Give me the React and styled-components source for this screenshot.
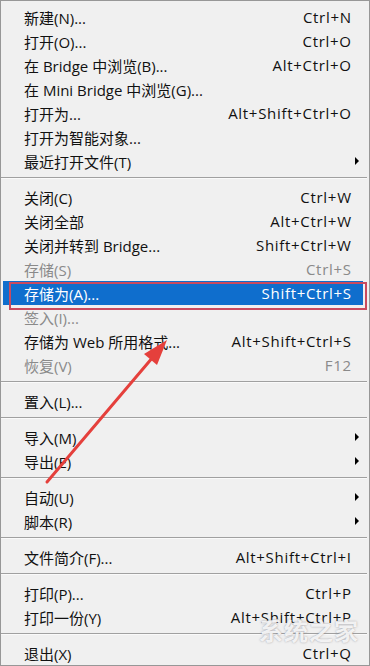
import React from "react";
import styled, { createGlobalStyle } from "styled-components";

const GlobalStyle = createGlobalStyle`
  html, body {
    margin: 0;
    padding: 0;
    background: #f0f0f0;
  }
`;

const Menu = styled.div`
  position: relative;
  box-sizing: border-box;
  width: 370px;
  height: 666px;
  padding-top: 4px;
  background: #f0f0f0;
  border: 1px solid #979797;
  font-family: "Open Sans", "Noto Sans CJK SC", sans-serif;
  font-size: 15px;
  color: #111;
  overflow: hidden;
`;

const Row = styled.div`
  display: flex;
  align-items: center;
  height: 24px;
  margin: 0 6px 0 2px;
  padding-left: 21px;
  background: ${(p) => (p.active ? "#0f6ecd" : "transparent")};
  color: ${(p) => (p.active ? "#fff" : p.disabled ? "#8a8a8a" : "#111")};
  white-space: nowrap;
`;

const Label = styled.span`
  flex: 1;
`;

const Shortcut = styled.span`
  text-align: right;
  letter-spacing: 0.7px;
  margin-right: -0.7px;
`;

const ArrowCell = styled.span`
  display: flex;
  align-items: center;
  width: 12px;
  padding-left: 4px;
  box-sizing: border-box;
`;

const Triangle = styled.span`
  width: 0;
  height: 0;
  border-top: 4px solid transparent;
  border-bottom: 4px solid transparent;
  border-left: 4px solid #000;
`;

const Separator = styled.div`
  box-sizing: border-box;
  height: 12px;
  padding-top: 4px;
  margin-right: 2px;
  &::after {
    content: "";
    display: block;
    height: 1px;
    background: #a0a0a0;
    border-bottom: 1px solid #fafafa;
  }
`;

const Highlight = styled.div`
  position: absolute;
  left: 8px;
  top: 281px;
  width: 354px;
  height: 24px;
  border: 2px solid #c94a5f;
  pointer-events: none;
`;

const Overlay = styled.svg`
  position: absolute;
  left: 0;
  top: 0;
  pointer-events: none;
`;

const Watermark = styled.div`
  position: absolute;
  right: 10px;
  bottom: 18px;
  font-family: "Noto Sans CJK SC", sans-serif;
  font-size: 24px;
  font-weight: 700;
  letter-spacing: 1px;
  color: rgba(255, 255, 255, 0.85);
  text-shadow: 0 0 2px rgba(120, 120, 130, 0.7);
  pointer-events: none;
`;

const groups = [
  [
    { label: "新建(N)...", key: "Ctrl+N" },
    { label: "打开(O)...", key: "Ctrl+O" },
    { label: "在 Bridge 中浏览(B)...", key: "Alt+Ctrl+O" },
    { label: "在 Mini Bridge 中浏览(G)..." },
    { label: "打开为...", key: "Alt+Shift+Ctrl+O" },
    { label: "打开为智能对象..." },
    { label: "最近打开文件(T)", sub: true },
  ],
  [
    { label: "关闭(C)", key: "Ctrl+W" },
    { label: "关闭全部", key: "Alt+Ctrl+W" },
    { label: "关闭并转到 Bridge...", key: "Shift+Ctrl+W" },
    { label: "存储(S)", key: "Ctrl+S", disabled: true },
    { label: "存储为(A)...", key: "Shift+Ctrl+S", active: true },
    { label: "签入(I)...", disabled: true },
    { label: "存储为 Web 所用格式...", key: "Alt+Shift+Ctrl+S" },
    { label: "恢复(V)", key: "F12", disabled: true },
  ],
  [{ label: "置入(L)..." }],
  [
    { label: "导入(M)", sub: true },
    { label: "导出(E)", sub: true },
  ],
  [
    { label: "自动(U)", sub: true },
    { label: "脚本(R)", sub: true },
  ],
  [{ label: "文件简介(F)...", key: "Alt+Shift+Ctrl+I" }],
  [
    { label: "打印(P)...", key: "Ctrl+P" },
    { label: "打印一份(Y)", key: "Alt+Shift+Ctrl+P" },
  ],
  [{ label: "退出(X)", key: "Ctrl+Q" }],
];

export default function App() {
  return (
    <>
      <GlobalStyle />
      <Menu>
        {groups.map((items, gi) => (
          <React.Fragment key={gi}>
            {gi > 0 && <Separator />}
            {items.map((it) => (
              <Row key={it.label} active={it.active} disabled={it.disabled}>
                <Label>{it.label}</Label>
                {it.key && <Shortcut>{it.key}</Shortcut>}
                <ArrowCell>{it.sub && <Triangle />}</ArrowCell>
              </Row>
            ))}
          </React.Fragment>
        ))}
        <Highlight />
        <Overlay width="370" height="666" viewBox="0 0 370 666">
          <line x1="46" y1="481" x2="152" y2="356" stroke="#e5403c" strokeWidth="3" strokeLinecap="round" />
          <polygon points="166,339 143,353 156,364" fill="#e5403c" />
        </Overlay>
        <Watermark>系统之家</Watermark>
      </Menu>
    </>
  );
}
